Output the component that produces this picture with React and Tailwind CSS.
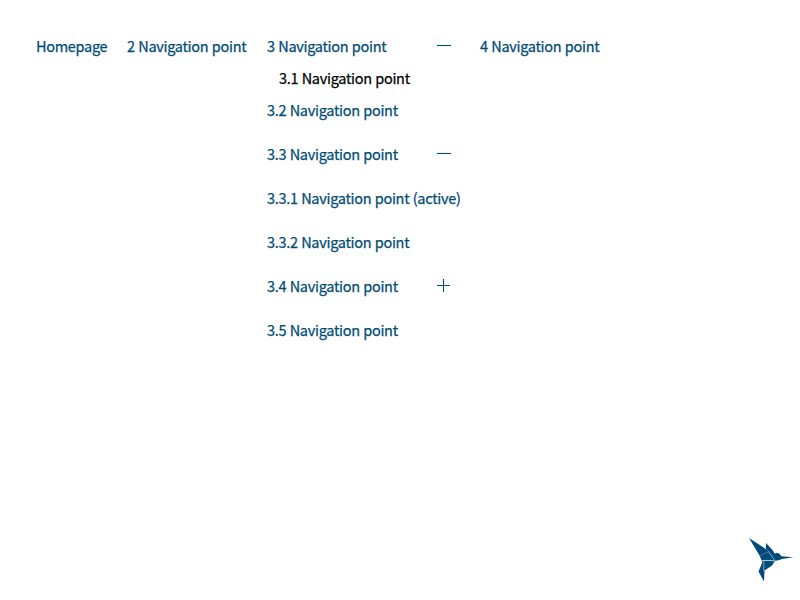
const children = [
  { label: "3.1 Navigation point", row: "h-8 pl-3 text-black" },
  { label: "3.2 Navigation point", row: "h-8" },
  { label: "3.3 Navigation point", row: "mt-3 h-8", toggle: "minus" },
  { label: "3.3.1 Navigation point (active)", row: "mt-3 h-8" },
  { label: "3.3.2 Navigation point", row: "mt-3 h-8" },
  { label: "3.4 Navigation point", row: "mt-3 h-8", toggle: "plus" },
  { label: "3.5 Navigation point", row: "mt-3 h-8" },
];

function Toggle({ kind }) {
  return (
    <svg className="mr-[9px] ml-auto h-[15px] w-[15px] shrink-0 -translate-y-px" viewBox="0 0 15 15" fill="none" stroke="currentColor">
      {kind === "plus" ? <path d="M1 7.5H14M7.5 1V14" strokeWidth="1.1" /> : <path d="M1 7.5H15" strokeWidth="1.1" />}
    </svg>
  );
}

function Hummingbird() {
  return (
    <svg className="h-[60px] w-[60px] text-[#004b7c]" viewBox="0 0 60 60" fill="currentColor">
      <path d="M9 8L28 20.5L35 30.5L21.5 30.3L19.8 26Z" />
      <path d="M26 13L32.5 20L35 24L35 30.5L28 21L25.8 18.6Z" />
      <path d="M32.5 25L36.5 22.8L39.5 23.8L41.5 26.3L53.5 27.3L42 28.9L39.5 30L34.5 31L30 26Z" />
      <path d="M21.5 30.5L35 30.8L32 35.5L24.5 40.5L24 51.5L18.5 41.5L22.3 32.5Z" />
      <path d="M28 21L35 30.7M22 30.4L35 30.8M23.8 31V41" fill="none" stroke="white" strokeWidth=".5" />
      <path d="M19.8 26L28 22" fill="none" stroke="white" strokeWidth=".25" />
    </svg>
  );
}

export default function App() {
  return (
    <div className="flex h-[600px] w-[800px] flex-col justify-between bg-white pt-[30px] font-['Noto_Sans_CJK_SC','Noto_Sans',sans-serif] text-[14.5px] font-normal tracking-[-0.3px] whitespace-nowrap text-[#004b76] [-webkit-text-stroke:0.25px_currentColor] [word-spacing:0.5px]">
      <nav className="flex items-start gap-5 pl-9 leading-8">
        <a className="w-[71px]">Homepage</a>
        <a className="w-[120px]">2 Navigation point</a>
        <ul className="w-[193px]">
          <li className="flex h-8 items-center">3 Navigation point<Toggle kind="minus" /></li>
          {children.map((item) => (
            <li key={item.label} className={`flex items-center ${item.row}`}>
              {item.label}
              {item.toggle && <Toggle kind={item.toggle} />}
            </li>
          ))}
        </ul>
        <a>4 Navigation point</a>
      </nav>
      <div className="flex justify-end pb-[10px]"><Hummingbird /></div>
    </div>
  );
}
